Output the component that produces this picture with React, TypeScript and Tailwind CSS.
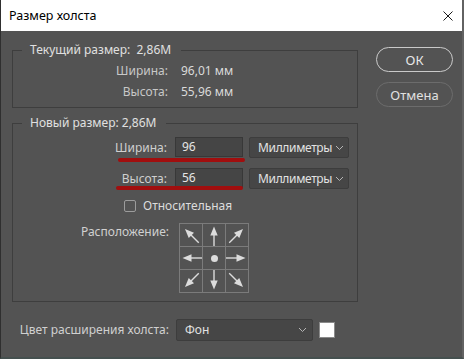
import React from "react";

const Chevron = () => (
	<svg width="9" height="6" viewBox="0 0 9 6" className="shrink-0">
		<polyline points="1,1 4.5,4.5 8,1" fill="none" stroke="#b5b5b5" strokeWidth="1" />
	</svg>
);

function Arrow({ angle }: { angle: number }) {
	return (
		<svg width="22" height="22" viewBox="0 0 22 22">
			<g transform={`rotate(${angle} 11 11)`}>
				<line x1="11" y1="11" x2="11" y2="22" stroke="#dcdcdc" strokeWidth="1.4" />
				<polygon points="11,2.5 7.3,11.5 14.7,11.5" fill="#dcdcdc" />
			</g>
		</svg>
	);
}

function AnchorGrid() {
	const cells = [-45, 0, 45, -90, null, 90, -135, 180, 135];
	return (
		<div className="grid grid-cols-3 gap-px bg-[#7b7b7b] p-px w-[70px]">
			{cells.map((a, i) => (
				<div key={i} className="w-[22px] h-[22px] bg-[#535353] flex items-center justify-center">
					{a === null ? (
						<div className="w-[7px] h-[7px] rounded-full bg-[#dcdcdc]" />
					) : (
						<Arrow angle={a} />
					)}
				</div>
			))}
		</div>
	);
}

function UnitSelect() {
	return (
		<div className="w-[100px] h-[21px] bg-[#464646] border border-[#3d3d3d] rounded-[2px] flex items-center justify-between pl-[8px] pr-[4px] text-[#e2e2e2]">
			<span className="tracking-[-0.35px]">Миллиметры</span>
			<Chevron />
		</div>
	);
}

function SizeRow({ label, value, lineTop, lineLeft }: { label: string; value: string; lineTop: string; lineLeft: string }) {
	return (
		<div className="relative flex items-center h-[21px]">
			<span className="w-[155px] text-right pr-px text-[#d0d0d0]">{label}</span>
			<div className="ml-[7px] w-[68px] h-[20px] self-start bg-[#454545] border border-[#383838] flex items-center px-[6px] text-[#e6e6e6]">
				{value}
			</div>
			<div className="ml-[6px]">
				<UnitSelect />
			</div>
			<div className={`absolute h-[4px] w-[127px] rounded-full bg-[#a10e0e] ${lineTop} ${lineLeft}`} />
		</div>
	);
}

export default function App() {
	return (
		<div className="w-[464px] h-[359px] bg-[#535353] font-['Noto_Sans',sans-serif] text-[12px] leading-[18px] flex flex-col overflow-hidden border-l border-[#2f2f2f] border-r-2 border-r-[#626262] border-b-2 border-b-[#45504f]">
			<div className="h-[31px] bg-white flex items-center justify-between pl-[8px] pr-[9px] shrink-0">
				<span className="text-black text-[12.5px]">Размер холста</span>
				<svg width="10" height="10" viewBox="0 0 10 10">
					<path d="M0.5 0.5 L9.5 9.5 M9.5 0.5 L0.5 9.5" stroke="#1a1a1a" strokeWidth="1" />
				</svg>
			</div>

			<div className="flex">
				<div className="ml-[11px] w-[346px] flex flex-col">
					<fieldset className="mt-[10px] h-[67px] border border-[#3e3e3e]">
						<legend className="ml-[9px] pl-[8px] pr-[10px] text-[#e0e0e0]">Текущий размер:&nbsp; 2,86M</legend>
						<div className="pt-[3px] flex flex-col gap-[3px]">
							<div className="flex">
								<span className="w-[155px] text-right text-[#c8c8c8]">Ширина:</span>
								<span className="ml-[13px] text-[#dadada]">96,01 мм</span>
							</div>
							<div className="flex">
								<span className="w-[155px] text-right text-[#c8c8c8]">Высота:</span>
								<span className="ml-[13px] text-[#dadada]">55,96 мм</span>
							</div>
						</div>
					</fieldset>

					<fieldset className="mt-[6px] h-[188px] border border-[#3e3e3e]">
						<legend className="ml-[9px] pl-[8px] pr-[10px] text-[#e0e0e0]">Новый размер: 2,86M</legend>
						<div className="pt-[5px] flex flex-col">
							<SizeRow label="Ширина:" value="96" lineTop="top-[21px]" lineLeft="left-[105px]" />
							<div className="mt-[10px]">
								<SizeRow label="Высота:" value="56" lineTop="top-[18px]" lineLeft="left-[103px]" />
							</div>
							<div className="mt-[8px] h-[18px] flex items-center pl-[111px]">
								<div className="w-[12px] h-[12px] border border-[#9c9c9c] rounded-[2px]" />
								<span className="ml-[7px] text-[#dcdcdc]">Относительная</span>
							</div>
							<div className="mt-[8px] flex items-start">
								<span className="w-[156px] text-right text-[#d0d0d0]">Расположение:</span>
								<div className="ml-[10px]">
									<AnchorGrid />
								</div>
							</div>
						</div>
					</fieldset>

					<div className="mt-[17px] flex items-center h-[22px]">
						<span className="w-[157px] text-right text-[#d0d0d0]">Цвет расширения холста:</span>
						<div className="ml-[7px] w-[137px] h-[22px] bg-[#464646] border border-[#3d3d3d] rounded-[2px] flex items-center justify-between pl-[8px] pr-[5px] text-[#e2e2e2]">
							<span>Фон</span>
							<Chevron />
						</div>
						<div className="ml-[6px] w-[16px] h-[16px] bg-white border border-[#8a8a8a]" />
					</div>
				</div>

				<div className="ml-[18px] w-[77px] flex flex-col">
					<button className="mt-[16px] h-[25px] rounded-full border-[1.5px] border-[#cacaca] text-[#e8e8e8] text-[13px]">ОК</button>
					<button className="mt-[10px] h-[25px] rounded-full border-[1.5px] border-[#6c6c6c] text-[#e0e0e0] text-[13px]">Отмена</button>
				</div>
			</div>
		</div>
	);
}
